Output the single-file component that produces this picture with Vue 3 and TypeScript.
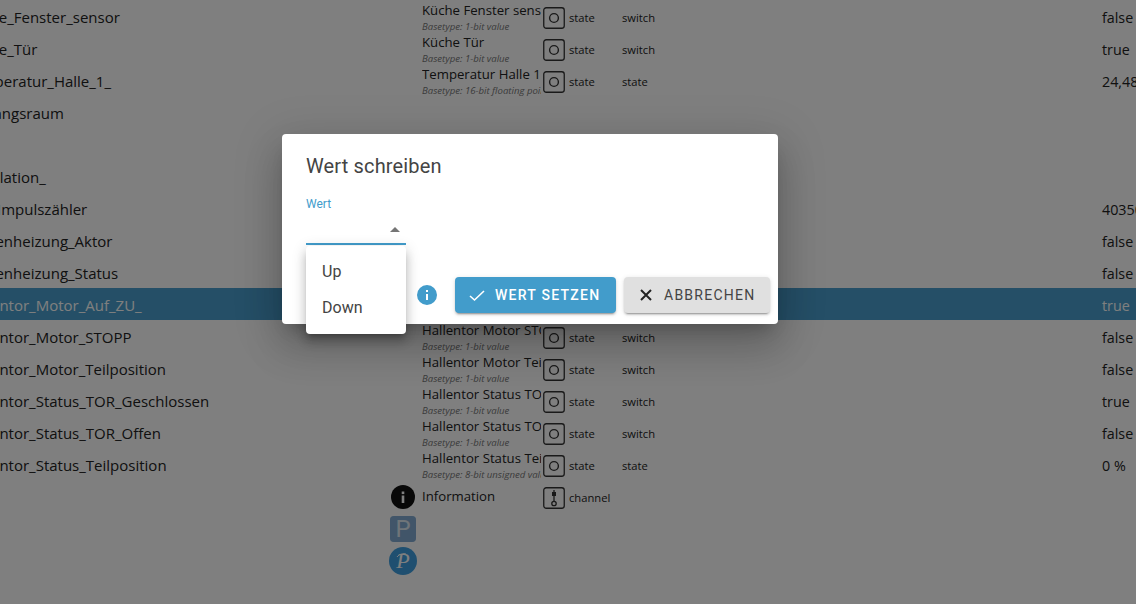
<script setup lang="ts">
interface Row {
  name: string
  label?: string
  base?: string
  kind?: 'state' | 'channel'
  role?: string
  type?: string
  value?: string
  selected?: boolean
}
const bit = 'Basetype: 1-bit value'
const rows: Row[] = [
  { name: 'Küche_Fenster_sensor', label: 'Küche Fenster sensor', base: bit, kind: 'state', role: 'state', type: 'switch', value: 'false' },
  { name: 'Küche_Tür', label: 'Küche Tür', base: bit, kind: 'state', role: 'state', type: 'switch', value: 'true' },
  { name: 'Temperatur_Halle_1_', label: 'Temperatur Halle 1', base: 'Basetype: 16-bit floating point value', kind: 'state', role: 'state', type: 'state', value: '24,48 °C' },
  { name: 'Eingangsraum' },
  { name: '' },
  { name: 'Ventilation_' },
  { name: 'Gas_Impulszähler', value: '40350' },
  { name: 'Rinnenheizung_Aktor', value: 'false' },
  { name: 'Rinnenheizung_Status', value: 'false' },
  { name: 'Hallentor_Motor_Auf_ZU_', value: 'true', selected: true },
  { name: 'Hallentor_Motor_STOPP', label: 'Hallentor Motor STOPP', base: bit, kind: 'state', role: 'state', type: 'switch', value: 'false' },
  { name: 'Hallentor_Motor_Teilposition', label: 'Hallentor Motor Teilposition', base: bit, kind: 'state', role: 'state', type: 'switch', value: 'false' },
  { name: 'Hallentor_Status_TOR_Geschlossen', label: 'Hallentor Status TOR Geschlossen', base: bit, kind: 'state', role: 'state', type: 'switch', value: 'true' },
  { name: 'Hallentor_Status_TOR_Offen', label: 'Hallentor Status TOR Offen', base: bit, kind: 'state', role: 'state', type: 'switch', value: 'false' },
  { name: 'Hallentor_Status_Teilposition', label: 'Hallentor Status Teilposition', base: 'Basetype: 8-bit unsigned value', kind: 'state', role: 'state', type: 'state', value: '0 %' },
  { name: '', label: 'Information', kind: 'channel', role: 'channel' }
]
</script>

<template>
  <div class="page">
    <div class="table">
      <div v-for="(r, i) in rows" :key="i" class="row" :class="{ selected: r.selected }">
        <div class="name">{{ r.name }}</div>
        <div class="lead">
          <svg v-if="r.kind === 'channel'" width="24" height="24" viewBox="0 0 24 24">
            <circle cx="12" cy="12" r="12" fill="#111" />
            <rect x="10.7" y="10.5" width="2.6" height="7.5" fill="#fff" />
            <rect x="10.7" y="6.5" width="2.6" height="2.6" fill="#fff" />
          </svg>
        </div>
        <div class="label">
          <div v-if="r.label" class="title" :class="{ low: r.kind === 'channel' }">{{ r.label }}</div>
          <div v-if="r.base" class="base">{{ r.base }}</div>
        </div>
        <div class="kind">
          <svg v-if="r.kind === 'state'" width="22" height="22" viewBox="0 0 22 22">
            <rect x="0.75" y="0.75" width="20.5" height="20.5" rx="2.5" fill="none" stroke="#333" stroke-width="1.3" />
            <circle cx="11" cy="11" r="4.4" fill="none" stroke="#333" stroke-width="1.4" />
          </svg>
          <svg v-else-if="r.kind === 'channel'" width="22" height="22" viewBox="0 0 22 22">
            <rect x="0.75" y="0.75" width="20.5" height="20.5" rx="2.5" fill="none" stroke="#333" stroke-width="1.3" />
            <line x1="11" y1="3" x2="11" y2="14" stroke="#333" stroke-width="1.3" />
            <rect x="9" y="5" width="4" height="4" fill="#333" />
            <circle cx="11" cy="16.5" r="2.2" fill="none" stroke="#333" stroke-width="1.3" />
          </svg>
        </div>
        <div class="role">{{ r.role }}</div>
        <div class="type">{{ r.type }}</div>
        <div class="value">{{ r.value }}</div>
      </div>
      <div class="row">
        <div class="name"></div>
        <div class="lead">
          <svg class="logo" width="26" height="26" viewBox="0 0 26 26">
            <rect width="26" height="26" rx="4" fill="#a3c5e6" />
            <rect width="26" height="26" rx="4" fill="#6d9ac4" opacity=".6" />
            <text x="13" y="21" text-anchor="middle" class="logo-p">P</text>
          </svg>
        </div>
      </div>
      <div class="row">
        <div class="name"></div>
        <div class="lead">
          <svg class="logo wide" width="28" height="28" viewBox="0 0 28 28">
            <circle cx="14" cy="14" r="14" fill="#3e9fe0" />
            <text x="14" y="21" text-anchor="middle" class="logo-s">P</text>
            <path d="M8 10c2-3 7-4 9-3" fill="none" stroke="#fff" stroke-width="1" />
          </svg>
        </div>
      </div>
    </div>

    <div class="overlay">
      <div class="dialog">
        <h2 class="dialog-title">Wert schreiben</h2>
        <div class="field">
          <span class="field-label">Wert</span>
          <div class="select"><span class="arrow"></span></div>
          <div class="menu">
            <div class="menu-item">Up</div>
            <div class="menu-item">Down</div>
          </div>
        </div>
        <div class="actions">
          <svg class="info" width="24" height="24" viewBox="0 0 24 24">
            <path fill="#429ccb" d="M12 2a10 10 0 1 0 0 20 10 10 0 0 0 0-20zm1 15h-2v-6h2v6zm0-8h-2V7h2v2z" />
          </svg>
          <button class="btn primary">
            <svg width="24" height="24" viewBox="0 0 24 24"><path fill="none" stroke="currentColor" stroke-width="1.6" d="M5 13l4.5 4L19 8" /></svg>
            WERT SETZEN
          </button>
          <button class="btn grey">
            <svg width="24" height="24" viewBox="0 0 24 24"><path fill="none" stroke="#222" stroke-width="2" d="M7 7l10 10M17 7L7 17" /></svg>
            ABBRECHEN
          </button>
        </div>
      </div>
    </div>
  </div>
</template>

<style>
html, body { margin: 0; background: #fff; overflow: hidden; }
</style>

<style scoped>
.page {
  position: relative;
  width: 1136px;
  height: 604px;
  overflow: hidden;
  background: #fff;
  font-family: "Open Sans", "Noto Sans", sans-serif;
  color: #222;
}
.table { margin-left: -36px; width: 1240px; }
.row {
  display: grid;
  grid-template-columns: 427px 31px 121px 26px 53px 480px 102px;
  height: 32px;
  align-items: center;
}
.row.selected { background: #4a9fce; color: #fff; }
.name { font-size: 15px; white-space: nowrap; padding-top: 2px; }
.value { font-size: 14.3px; white-space: nowrap; padding-top: 2px; }
.lead { display: flex; align-items: center; height: 24px; margin-top: 2px; }
.label { overflow: hidden; white-space: nowrap; height: 32px; width: 119px; }
.title { font-size: 13.2px; line-height: 16px; margin-top: 2px; }
.title.low { margin-top: 8px; }
.base { font-size: 9.6px; line-height: 12px; font-style: italic; color: #777; margin-top: 3px; }
.kind { display: flex; align-items: center; margin-top: 4px; }
.role, .type { font-size: 11.2px; padding-top: 2px; }
.logo { margin-left: -1px; }
.logo.wide { margin-left: -2px; }
.logo-p { font: 24px "Roboto", sans-serif; fill: #fff; opacity: .75; }
.logo-s { font: italic 22px "Liberation Serif", serif; fill: #fff; }

.overlay { position: absolute; inset: 0; background: rgba(0, 0, 0, .5); }
.dialog {
  position: absolute;
  left: 282px;
  top: 134px;
  width: 496px;
  height: 190px;
  box-sizing: border-box;
  padding: 20px 8px 0 24px;
  background: #fff;
  border-radius: 4px;
  box-shadow: 0 11px 15px -7px rgba(0,0,0,.2), 0 24px 38px 3px rgba(0,0,0,.14), 0 9px 46px 8px rgba(0,0,0,.12);
  font-family: Roboto, sans-serif;
  color: #444;
}
.dialog-title { margin: 0; font-size: 20px; font-weight: 400; line-height: 24px; letter-spacing: .15px; }
.field { position: relative; width: 100px; margin-top: 19px; height: 47px; }
.field-label { display: block; font-size: 12px; line-height: 14px; color: #429ccb; }
.select { position: relative; height: 32px; border-bottom: 2px solid #429ccb; }
.arrow {
  position: absolute;
  right: 6px;
  top: 16px;
  border-left: 5px solid transparent;
  border-right: 5px solid transparent;
  border-bottom: 5px solid #757575;
}
.menu {
  position: absolute;
  z-index: 2;
  left: 0;
  top: 49px;
  width: 100px;
  padding: 8px 0;
  box-sizing: border-box;
  background: #fff;
  border-radius: 4px;
  box-shadow: 0 5px 5px -3px rgba(0,0,0,.2), 0 8px 10px 1px rgba(0,0,0,.14), 0 3px 14px 2px rgba(0,0,0,.12);
}
.menu-item { height: 36px; line-height: 36px; padding-left: 16px; font-size: 16px; }
.actions {
  position: absolute;
  right: 8px;
  top: 143px;
  display: flex;
  align-items: center;
  gap: 8px;
}
.info { margin-right: 8px; }
.btn {
  display: flex;
  align-items: center;
  gap: 6px;
  height: 36px;
  padding: 0 0 0 10px;
  border: 0;
  border-radius: 4px;
  font: 500 14px Roboto, sans-serif;
  letter-spacing: 1.25px;
  white-space: nowrap;
  box-shadow: 0 3px 1px -2px rgba(0,0,0,.2), 0 2px 2px 0 rgba(0,0,0,.14), 0 1px 5px 0 rgba(0,0,0,.12);
}
.primary { background: #429ccb; color: #fff; width: 161px; }
.grey { background: #e0e0e0; color: #444; width: 146px; font-weight: 400; }
</style>
